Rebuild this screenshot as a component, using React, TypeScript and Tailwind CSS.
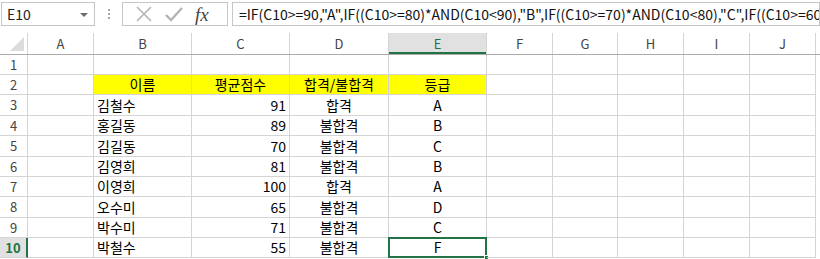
const cols = ["A", "B", "C", "D", "E", "F", "G", "H", "I", "J"];
const widths = [66, 98, 98, 99, 98, 66, 65, 66, 66, 66];
const rowHeights = [20, 20, 21, 20, 21, 20, 20, 21, 20, 20];

type Cell = { text: string; align?: "left" | "right" | "center" };

const header: Cell[] = [
  { text: "이름", align: "center" },
  { text: "평균점수", align: "center" },
  { text: "합격/불합격", align: "center" },
  { text: "등급", align: "center" },
];

const students = [
  ["김철수", "91", "합격", "A"],
  ["홍길동", "89", "불합격", "B"],
  ["김길동", "70", "불합격", "C"],
  ["김영희", "81", "불합격", "B"],
  ["이영희", "100", "합격", "A"],
  ["오수미", "65", "불합격", "D"],
  ["박수미", "71", "불합격", "C"],
  ["박철수", "55", "불합격", "F"],
];

const formula =
  '=IF(C10>=90,"A",IF((C10>=80)*AND(C10<90),"B",IF((C10>=70)*AND(C10<80),"C",IF((C10>=60)*AND(C10<70),"D","F"))))';

function rowCells(r: number): (Cell | null)[] {
  if (r === 2) return [null, ...header, null, null, null, null, null];
  if (r >= 3) {
    const s = students[r - 3];
    return [
      null,
      { text: s[0], align: "left" },
      { text: s[1], align: "right" },
      { text: s[2], align: "center" },
      { text: s[3], align: "center" },
      null,
      null,
      null,
      null,
      null,
    ];
  }
  return cols.map(() => null);
}

function FormulaBar() {
  return (
    <div className="flex h-[28px] items-start pt-[2px] pl-[1px]">
      <div className="relative flex h-[24px] w-[94px] items-center border border-[#c6c6c6] bg-white pl-[5px] text-[14px] text-[#222]">
        E10
        <span className="absolute right-[6px] top-[10px] h-0 w-0 border-x-[4px] border-t-[4px] border-x-transparent border-t-[#6d6d6d]" />
      </div>
      <div className="flex w-[27px] flex-col items-center justify-center gap-[2px] pt-[7px]">
        <span className="h-[2px] w-[2px] bg-[#a8a8a8]" />
        <span className="h-[2px] w-[2px] bg-[#a8a8a8]" />
        <span className="h-[2px] w-[2px] bg-[#a8a8a8]" />
      </div>
      <div className="flex h-[24px] w-[106px] items-center border border-[#c6c6c6] bg-white">
        <svg width="18" height="18" viewBox="0 0 18 18" className="ml-[12px]">
          <path d="M2 2 L16 16 M16 2 L2 16" stroke="#b4b4b4" strokeWidth="1.6" fill="none" />
        </svg>
        <svg width="20" height="18" viewBox="0 0 20 18" className="ml-[11px]">
          <path d="M2 10 L7 15 L18 3" stroke="#b4b4b4" strokeWidth="2.4" fill="none" />
        </svg>
        <span className="ml-[11px] font-['Liberation_Serif',serif] text-[19px] italic leading-none text-[#444]">
          fx
        </span>
      </div>
      <div className="ml-[4px] flex h-[24px] min-w-0 flex-1 items-center overflow-hidden whitespace-nowrap border border-[#c6c6c6] bg-white pl-[6px] text-[14px] text-[#111]">
        {formula}
      </div>
    </div>
  );
}

export default function App() {
  return (
    <div className="h-[259px] w-[820px] overflow-hidden bg-white font-['Noto_Sans_CJK_KR','Noto_Sans',sans-serif]">
      <FormulaBar />
      <div className="mt-[5px] flex flex-col">
        {/* column headers */}
        <div className="flex h-[22px] border-b border-[#ababab]">
          <div className="relative w-[28px] shrink-0 border-r border-[#d4d4d4]">
            <svg width="14" height="14" viewBox="0 0 14 14" className="absolute bottom-[3px] right-[3px]">
              <path d="M14 0 L14 14 L0 14 Z" fill="#dcdcdc" />
            </svg>
          </div>
          {cols.map((c, i) => (
            <div
              key={c}
              style={{ width: widths[i] }}
              className={
                c === "E"
                  ? "flex shrink-0 items-center justify-center border-r border-[#d4d4d4] bg-[#e1e1e1] text-[13px] text-[#217346] shadow-[inset_0_-2px_0_#217346]"
                  : "flex shrink-0 items-center justify-center border-r border-[#d4d4d4] text-[13px] text-[#444]"
              }
            >
              {c}
            </div>
          ))}
        </div>
        {rowHeights.map((h, ri) => {
          const r = ri + 1;
          const cells = rowCells(r);
          const active = r === 10;
          return (
            <div key={r} className="flex" style={{ height: h }}>
              <div
                className={
                  active
                    ? "flex w-[28px] shrink-0 items-center justify-center border-b border-r-2 border-[#d4d4d4] border-r-[#217346] bg-[#e1e1e1] text-[13px] font-bold text-[#217346]"
                    : "flex w-[28px] shrink-0 items-center justify-center border-b border-r border-[#d4d4d4] text-[13px] text-[#444]"
                }
              >
                {r}
              </div>
              {cells.map((cell, ci) => {
                const yellow = r === 2 && ci >= 1 && ci <= 4;
                const isActive = active && ci === 4;
                const align =
                  cell?.align === "right"
                    ? "justify-end pr-[3px]"
                    : cell?.align === "center"
                    ? "justify-center"
                    : "justify-start pl-[3px]";
                return (
                  <div
                    key={ci}
                    style={{ width: widths[ci] }}
                    className={`relative flex shrink-0 items-center whitespace-nowrap border-b border-r border-[#d4d4d4] text-[14px] text-black ${align} ${
                      yellow ? "bg-[#ffff00]" : ""
                    }`}
                  >
                    {cell?.text}
                    {isActive && (
                      <>
                        <span className="absolute -left-[1px] -top-[1px] bottom-[-1px] right-[-1px] border-2 border-[#217346]" />
                        <span className="absolute bottom-[-3px] right-[-3px] h-[5px] w-[5px] border border-white bg-[#217346]" />
                      </>
                    )}
                  </div>
                );
              })}
            </div>
          );
        })}
      </div>
    </div>
  );
}
